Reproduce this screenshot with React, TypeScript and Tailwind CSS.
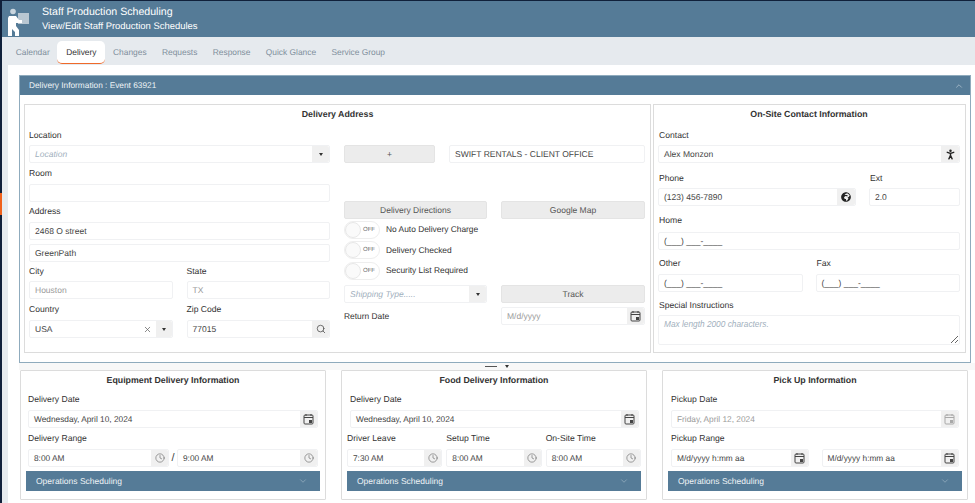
import React from "react";
import { Clock, Search, ChevronDown, ChevronUp, X, PersonStanding } from "lucide-react";
import { FaGlobeAfrica } from "react-icons/fa";

const labelCls = "text-[8.6px] leading-[10px] text-[#333] h-[10px]";
const boxCls = "flex h-[18px] bg-white border border-[#f0f1f3] rounded-[2px] items-center";

function CalIcon({ faded }: { faded?: boolean }) {
  return (
    <svg width="11" height="12" viewBox="0 0 11 12" fill="none" stroke={faded ? "#a8a8a8" : "#444"} strokeWidth="1">
      <rect x="1" y="2" width="9" height="9" rx="1" />
      <path d="M1 4.5h9M3 1v2M8 1v2" />
      <rect x="6" y="7" width="3" height="3" fill={faded ? "#a8a8a8" : "#444"} stroke="none" />
    </svg>
  );
}

function Field({ value, muted, placeholder, className = "", addon, addonW = "w-[17px]", clear, small }: { value?: string; muted?: boolean; placeholder?: boolean; className?: string; addon?: React.ReactNode; addonW?: string; clear?: boolean; small?: boolean }) {
  return (
    <div className={`${boxCls} ${className}`}>
      <span className={`flex-1 min-w-0 pl-[5px] whitespace-nowrap overflow-hidden ${small ? "text-[8.3px]" : "text-[8.5px]"} ${placeholder ? "italic text-[#9fb0bd]" : muted ? "text-[#9a9a9a]" : "text-[#444]"}`}>{value}</span>
      {clear && <X size={9} color="#666" className="mr-[4px] shrink-0" />}
      {addon && <span className={`${addonW} h-full shrink-0 bg-[#f0f0f0] flex items-center justify-center rounded-r-[2px]`}>{addon}</span>}
    </div>
  );
}

const Caret = () => <span className="w-0 h-0 border-l-[2.5px] border-r-[2.5px] border-t-[3.5px] border-l-transparent border-r-transparent border-t-[#333]" />;
const ClockI = () => <Clock size={10} color="#666" strokeWidth={1.5} />;

function Btn({ children, className = "" }: { children: React.ReactNode; className?: string }) {
  return <div className={`h-[18px] bg-[#ececec] border border-[#e4e4e4] rounded-[2px] text-[8.5px] text-[#555] flex items-center justify-center ${className}`}>{children}</div>;
}

function Toggle({ label }: { label: string }) {
  return (
    <div className="flex items-center h-[18px]">
      <div className="relative w-[36px] h-[18px] bg-white border border-[#eeeeee] rounded-full">
        <div className="absolute left-0 top-0 w-[16px] h-[16px] bg-[#fafafa] border border-[#e8e8e8] rounded-full" />
        <span className="absolute right-[4px] top-[5px] text-[6px] leading-[6px] text-[#666]">OFF</span>
      </div>
      <span className="ml-[6px] text-[8.4px] text-[#333]">{label}</span>
    </div>
  );
}

function OpsBar() {
  return (
    <div className="h-[20px] mt-[4px] mx-[5px] bg-[#557b97] flex items-center justify-between pl-[10px] pr-[12px] text-[8.5px] text-[#eef3f6]">
      <span>Operations Scheduling</span>
      <ChevronDown size={10} color="#8fa9bc" />
    </div>
  );
}

function Card({ title, children }: { title: string; children: React.ReactNode }) {
  return (
    <div className="w-[306px] h-[130px] bg-white border border-[#dcdcdc] rounded-[1px] flex flex-col">
      <div className="h-[19px] pt-[3px] text-center text-[8.8px] leading-[12px] font-bold text-[#333]">{title}</div>
      {children}
    </div>
  );
}

const tabs = ["Calendar", "Delivery", "Changes", "Requests", "Response", "Quick Glance", "Service Group"];

export default function App() {
  return (
    <div className="w-[975px] h-[503px] overflow-hidden relative bg-[#e6eaee] [font-family:Liberation_Sans,Arial,sans-serif] [text-rendering:geometricPrecision] flex flex-col">
      <div className="absolute left-0 top-0 bottom-0 w-[2px] bg-[#10203a]" />
      <div className="absolute left-0 top-[193px] h-[22px] w-[2px] bg-[#f0611c]" />

      <header className="h-[37px] shrink-0 bg-[#557b97] border-t border-[#10203a] flex text-white">
        <svg className="ml-[7px] mt-[7px]" width="24" height="30" viewBox="0 0 24 30">
          <circle cx="6" cy="3.5" r="2.8" fill="#c9d5de" />
          <rect x="11" y="5" width="11" height="11" fill="#b9c7d2" />
          <path d="M2 8h7l3 4h3v3H9v3l3 4v6H8v-4l-3-3v7H1V10z" fill="#fff" />
        </svg>
        <div className="ml-[11px] pt-[4px]">
          <div className="text-[10.6px] leading-[14px]">Staff Production Scheduling</div>
          <div className="text-[9.45px] leading-[14px] mt-[1px]">View/Edit Staff Production Schedules</div>
        </div>
      </header>

      <nav className="h-[28px] shrink-0 flex items-end pl-[8px]">
        {tabs.map((t) =>
          t === "Delivery" ? (
            <div key={t} className="w-[48px] h-[23px] mb-[1px] bg-white rounded-[5px] border-b-[1.5px] border-[#ef6a2a] flex items-center justify-center text-[8.4px] text-[#333]">{t}</div>
          ) : (
            <div key={t} className="h-[23px] mb-[1px] px-[7.7px] flex items-center text-[8.4px] text-[#7f8f9c]">{t}</div>
          )
        )}
      </nav>

      <main className="flex-1 ml-[8px] bg-white flex flex-col pl-[11px] pt-[10px]">
        <section className="h-[288px] w-[952px] border border-[#8fabbd] flex flex-col">
          <div className="h-[19px] shrink-0 bg-[#557b97] flex items-center justify-between pl-[9px] pr-[6px] text-[8.3px] text-[#eef3f6]">
            <span>Delivery Information : Event 63921</span>
            <ChevronUp size={10} color="#a9bdcb" />
          </div>
          <div className="flex gap-[2px] pl-[4px] pt-[9px]">
            <div className="w-[627px] h-[249px] border border-[#dcdcdc] flex flex-col">
              <div className="h-[18px] pt-[3px] text-center text-[8.8px] leading-[12px] font-bold text-[#333]">Delivery Address</div>
              <div className="flex pl-[4px] gap-[14px]">
                <div className="w-[301px] flex flex-col">
                  <div className={`${labelCls} mt-[7px] mb-[5px]`}>Location</div>
                  <Field value="Location" placeholder addon={<Caret />} />
                  <div className={`${labelCls} mt-[5px] mb-[6px]`}>Room</div>
                  <Field />
                  <div className={`${labelCls} mt-[4px] mb-[6px]`}>Address</div>
                  <Field value="2468 O street" />
                  <Field value="GreenPath" className="mt-[4px]" />
                  <div className="grid grid-cols-2 gap-x-[14px] mt-[4px]">
                    <div className={labelCls}>City</div>
                    <div className={labelCls}>State</div>
                  </div>
                  <div className="grid grid-cols-2 gap-x-[14px] mt-[5px]">
                    <Field value="Houston" muted />
                    <Field value="TX" muted />
                  </div>
                  <div className="grid grid-cols-2 gap-x-[14px] mt-[5px]">
                    <div className={labelCls}>Country</div>
                    <div className={labelCls}>Zip Code</div>
                  </div>
                  <div className="grid grid-cols-2 gap-x-[14px] mt-[6px]">
                    <Field value="USA" clear addon={<Caret />} addonW="w-[16px]" />
                    <Field value="77015" addon={<Search size={10} color="#555" />} />
                  </div>
                </div>
                <div className="w-[301px] flex flex-col pt-[22px]">
                  <div className="flex gap-[14px]">
                    <Btn className="w-[91px]">+</Btn>
                    <Field value="SWIFT RENTALS - CLIENT OFFICE" className="w-[196px]" />
                  </div>
                  <div className="flex gap-[14px] mt-[38px]">
                    <Btn className="w-[143px]">Delivery Directions</Btn>
                    <Btn className="w-[144px]">Google Map</Btn>
                  </div>
                  <div className="flex flex-col gap-[2.5px] mt-[1.5px]">
                    <Toggle label="No Auto Delivery Charge" />
                    <Toggle label="Delivery Checked" />
                    <Toggle label="Security List Required" />
                  </div>
                  <div className="flex gap-[14px] mt-[5.5px]">
                    <Field value="Shipping Type....." placeholder addon={<Caret />} className="w-[143px]" />
                    <Btn className="w-[144px] text-[#444]">Track</Btn>
                  </div>
                  <div className="flex gap-[14px] mt-[4px] items-center">
                    <div className="w-[143px] text-[8.4px] text-[#333]">Return Date</div>
                    <Field value="M/d/yyyy" muted addon={<CalIcon />} className="w-[144px]" />
                  </div>
                </div>
              </div>
            </div>

            <div className="w-[313px] h-[249px] border border-[#dcdcdc] pl-[4px] pr-[5px] flex flex-col">
              <div className="h-[18px] pt-[3px] text-center text-[8.8px] leading-[12px] font-bold text-[#333]">On-Site Contact Information</div>
              <div className={`${labelCls} mt-[7px] mb-[5px] ml-[1px]`}>Contact</div>
              <Field value="Alex Monzon" addon={<PersonStanding size={13} color="#222" strokeWidth={2.6} />} addonW="w-[18px]" />
              <div className="flex gap-[13px] mt-[10px]">
                <div className="flex-1 min-w-0">
                  <div className={`${labelCls} mb-[5px] ml-[1px]`}>Phone</div>
                  <Field value="(123) 456-7890" addon={<FaGlobeAfrica size={10} color="#222" />} addonW="w-[18px]" />
                </div>
                <div className="w-[91px]">
                  <div className={`${labelCls} mb-[5px] ml-[1px]`}>Ext</div>
                  <Field value="2.0" />
                </div>
              </div>
              <div className={`${labelCls} mt-[9px] mb-[7px] ml-[1px]`}>Home</div>
              <Field value="(___) ___-____" />
              <div className="flex gap-[13px] mt-[8px]">
                <div className="flex-1">
                  <div className={`${labelCls} mb-[6px] ml-[1px]`}>Other</div>
                  <Field value="(___) ___-____" />
                </div>
                <div className="flex-1">
                  <div className={`${labelCls} mb-[6px] ml-[1px]`}>Fax</div>
                  <Field value="(___) ___-____" />
                </div>
              </div>
              <div className={`${labelCls} mt-[8px] mb-[5px] ml-[1px]`}>Special Instructions</div>
              <textarea readOnly className="h-[30px] border border-[#f0f1f3] rounded-[2px] px-[5px] py-[2px] text-[8.3px] italic text-[#9fb0bd] outline-none resize-y leading-[12px] placeholder:text-[#9fb0bd]" placeholder="Max length 2000 characters." />
            </div>
          </div>
        </section>

        <div className="h-[7px] w-[956px] bg-[#f8f8f8] flex items-center justify-center gap-[8px] shrink-0">
          <span className="w-[12px] h-[1.5px] bg-[#555]" />
          <span className="w-0 h-0 border-l-[2px] border-r-[2px] border-t-[3px] border-l-transparent border-r-transparent border-t-[#333]" />
        </div>

        <div className="flex gap-[15px] pl-[1px]">
          <Card title="Equipment Delivery Information">
            <div className="px-[7px] flex flex-col">
              <div className={`${labelCls} mt-[4px] mb-[6px]`}>Delivery Date</div>
              <Field small value="Wednesday, April 10, 2024" addon={<CalIcon />} />
              <div className={`${labelCls} mt-[5px] mb-[6px]`}>Delivery Range</div>
              <div className="flex items-center">
                <Field small value="8:00 AM" addon={<ClockI />} className="w-[141px]" />
                <span className="w-[8px] text-center text-[11px] text-[#444]">/</span>
                <Field small value="9:00 AM" addon={<ClockI />} className="flex-1" />
              </div>
            </div>
            <OpsBar />
          </Card>
          <Card title="Food Delivery Information">
            <div className="px-[5px] flex flex-col">
              <div className={`${labelCls} mt-[4px] mb-[6px] ml-[3px]`}>Delivery Date</div>
              <Field small value="Wednesday, April 10, 2024" addon={<CalIcon />} className="ml-[3px] mr-[2px]" />
              <div className="flex gap-[4px] mt-[5px]">
                {[["Driver Leave", "7:30 AM"], ["Setup Time", "8:00 AM"], ["On-Site Time", "8:00 AM"]].map(([l, v]) => (
                  <div key={l} className="flex-1 min-w-0">
                    <div className={`${labelCls} mb-[6px]`}>{l}</div>
                    <Field small value={v} addon={<ClockI />} />
                  </div>
                ))}
              </div>
            </div>
            <OpsBar />
          </Card>
          <Card title="Pick Up Information">
            <div className="px-[8px] flex flex-col">
              <div className={`${labelCls} mt-[4px] mb-[6px]`}>Pickup Date</div>
              <Field small value="Friday, April 12, 2024" muted addon={<CalIcon faded />} />
              <div className={`${labelCls} mt-[5px] mb-[6px]`}>Pickup Range</div>
              <div className="flex gap-[13px]">
                <Field small value="M/d/yyyy h:mm aa" addon={<CalIcon />} className="flex-1 min-w-0" />
                <Field small value="M/d/yyyy h:mm aa" addon={<CalIcon />} className="flex-1 min-w-0" />
              </div>
            </div>
            <OpsBar />
          </Card>
        </div>
      </main>
    </div>
  );
}
